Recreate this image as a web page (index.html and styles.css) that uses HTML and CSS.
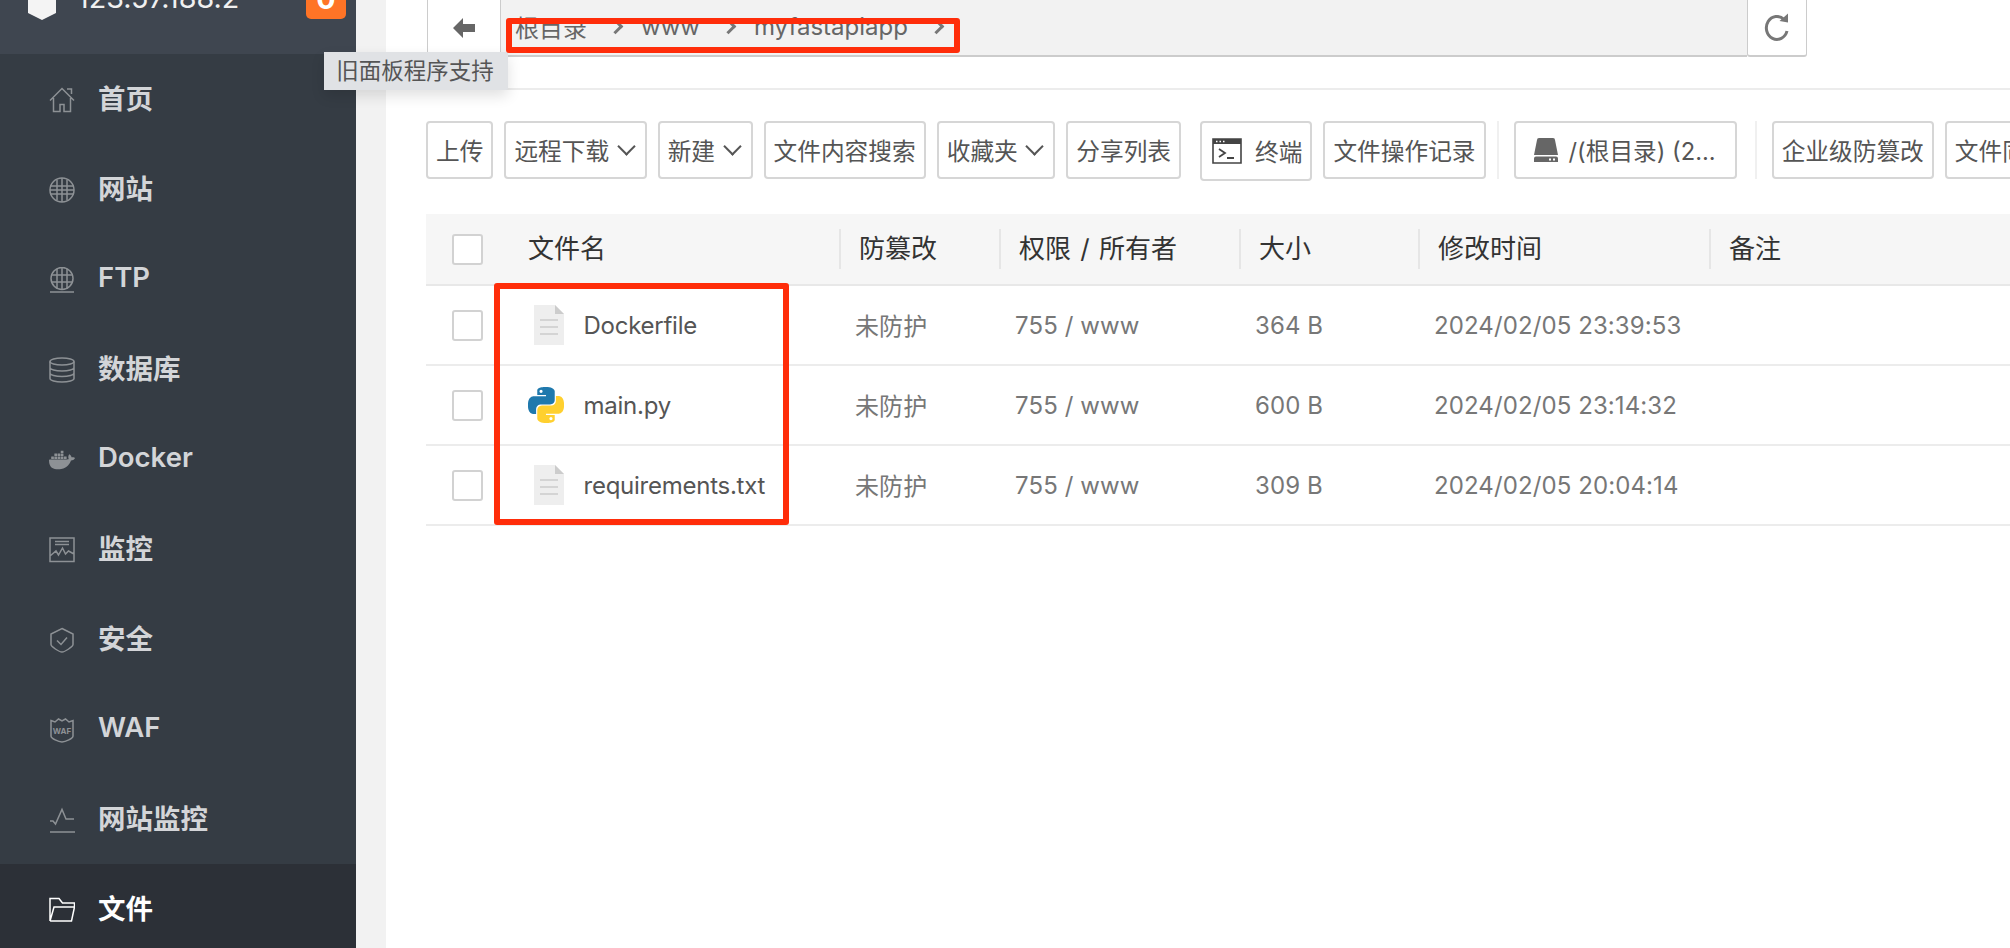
FILE: index.html
```html
<!DOCTYPE html>
<html>
    <head>
        <meta charset="utf-8">
        <title>文件</title>
        <link rel="stylesheet" href="styles.css">
    </head>
    <body>

        <div class="sidebar">
            <div class="side-top">
                <svg class="logo" viewBox="0 0 28 22"><path d="M0 0h28v15l-14 7-14-7z" fill="#f4f4f4"/></svg>
                <span class="ip">123.57.188.2</span>
                <span class="badge">0</span>
            </div>

            <a class="menu">
                <svg class="ico" viewBox="0 0 26 26"><path d="M1 13.500 13 1.500l12 12M4.500 11v13.500h6.500v-7h4v7h6.500V11M18 2h4.500v5"/></svg>
                首页
            </a>
            <a class="menu">
                <svg class="ico" viewBox="0 0 26 26"><circle cx="13" cy="13" r="12"/><path d="M1 9h24M1 13h24M1 17h24M8 2.500v21M13 1v24M18 2.500v21"/></svg>
                网站
            </a>
            <a class="menu">
                <svg class="ico" viewBox="0 0 26 26"><circle cx="13" cy="11.500" r="11"/><path d="M2 8h22M2 15h22M8 2v20M13 1v21M18 2v20M1 25h24"/></svg>
                FTP
            </a>
            <a class="menu">
                <svg class="ico" viewBox="0 0 26 26"><ellipse cx="13" cy="4.500" rx="12" ry="3.500"/><path d="M1 4.500v17c0 2 5.500 3.500 12 3.500s12-1.500 12-3.500v-17M1 10.500c0 2 5.500 3.500 12 3.500s12-1.500 12-3.500M1 16c0 2 5.500 3.500 12 3.500S25 18 25 16"/></svg>
                数据库
            </a>
            <a class="menu">
                <svg class="ico" viewBox="0 0 24 24"><path class="solid" d="M13.983 11.078h2.119a.186.186 0 00.186-.185V9.006a.186.186 0 00-.186-.186h-2.119a.185.185 0 00-.185.185v1.888c0 .102.083.185.185.185m-2.954-5.430h2.118a.186.186 0 00.186-.186V3.574a.186.186 0 00-.186-.185h-2.118a.185.185 0 00-.185.185v1.888c0 .102.082.185.185.186m0 2.716h2.118a.187.187 0 00.186-.186V6.290a.186.186 0 00-.186-.185h-2.118a.185.185 0 00-.185.185v1.887c0 .102.082.185.185.186m-2.930 0h2.120a.186.186 0 00.184-.186V6.290a.185.185 0 00-.185-.185H8.100a.185.185 0 00-.185.185v1.887c0 .102.083.185.185.186m-2.964 0h2.119a.186.186 0 00.185-.186V6.290a.185.185 0 00-.185-.185H5.136a.186.186 0 00-.186.185v1.887c0 .102.084.185.186.186m5.893 2.715h2.118a.186.186 0 00.186-.185V9.006a.186.186 0 00-.186-.186h-2.118a.185.185 0 00-.185.185v1.888c0 .102.082.185.185.185m-2.930 0h2.120a.185.185 0 00.184-.185V9.006a.185.185 0 00-.184-.186h-2.120a.185.185 0 00-.184.185v1.888c0 .102.083.185.185.185m-2.964 0h2.119a.185.185 0 00.185-.185V9.006a.185.185 0 00-.184-.186h-2.120a.186.186 0 00-.186.186v1.887c0 .102.084.185.186.185m-2.920 0h2.120a.185.185 0 00.184-.185V9.006a.185.185 0 00-.184-.186h-2.120a.185.185 0 00-.184.185v1.888c0 .102.082.185.185.185M23.763 9.890c-.065-.051-.672-.510-1.954-.510-.338.001-.676.030-1.010.087-.248-1.700-1.653-2.530-1.716-2.566l-.344-.199-.226.327c-.284.438-.490.922-.612 1.430-.230.970-.090 1.882.403 2.661-.595.332-1.550.413-1.744.420H.751a.751.751 0 00-.750.748 11.376 11.376 0 00.692 4.062c.545 1.428 1.355 2.480 2.410 3.124 1.180.723 3.100 1.137 5.275 1.137.983.003 1.963-.086 2.930-.266a12.248 12.248 0 003.823-1.389c.980-.567 1.860-1.288 2.610-2.136 1.252-1.418 1.998-2.997 2.553-4.400h.221c1.372 0 2.215-.549 2.680-1.009.309-.293.550-.650.707-1.046l.098-.288Z"/></svg>
                Docker
            </a>
            <a class="menu">
                <svg class="ico" viewBox="0 0 26 26"><path d="M1 1h24v23.500H1zM6 4.500h14M6 7.500h14M1 19l6-5 2.500 4 4-7 3 6 3-3 5.500 3"/></svg>
                监控
            </a>
            <a class="menu">
                <svg class="ico" viewBox="0 0 26 26"><path d="M13 1.500 24 7v10.500c0 2-8 7.500-11 7.500S2 19.500 2 17.500V7zM8 13.500l4 4 6-7"/></svg>
                安全
            </a>
            <a class="menu">
                <svg class="ico" viewBox="0 0 26 26"><path d="M2 3.500 6 5l3.500-3L13 4l3.500-2L20 5l4-1.500v15.500c0 2.500-7.500 6-11 6S2 21.500 2 19z"/><text class="waf-txt" x="13" y="16.500">WAF</text></svg>
                WAF
            </a>
            <a class="menu">
                <svg class="ico" viewBox="0 0 26 26"><path d="M1 14h3l2.500 3L13 2.500 17 12h8M1 25h25"/></svg>
                网站监控
            </a>
            <a class="menu active">
                <svg class="ico" viewBox="0 0 26 26"><path d="M1 24V1.500h9L13.500 6H25.500v4M1 24h21.500L25.500 10H5L1 24"/></svg>
                文件
            </a>
        </div>

        <div class="gutter"></div>

        <div class="main">
            <div class="pathbar">
                <div class="back">
                    <svg width="22" height="20" viewBox="0 0 22 20"><path d="M0 10 10 0v6h12v8H10v6z" fill="#666"/></svg>
                </div>
                <div class="crumbs">
                    <span>根目录</span><i class="chev"></i>
                    <span>www</span><i class="chev"></i>
                    <span>myfastapiapp</span><i class="chev"></i>
                </div>
                <div class="reload">
                    <svg width="30" height="32" viewBox="0 0 30 32"><path d="M22 7.500A10.500 11.500 0 1 0 25 19" fill="none" stroke="#777" stroke-width="3"/><path d="M17.500 9 26 10.500V1.500z" fill="#777"/></svg>
                </div>
            </div>

            <div class="toolbar">
                <button class="btn">上传</button>
                <button class="btn">远程下载<i class="caret"></i></button>
                <button class="btn">新建<i class="caret"></i></button>
                <button class="btn">文件内容搜索</button>
                <button class="btn">收藏夹<i class="caret"></i></button>
                <button class="btn">分享列表</button>
                <button class="btn term">
                    <svg width="30" height="26" viewBox="0 0 30 26"><path d="M1 1h28v24H1z" fill="#fff" stroke="#444" stroke-width="1.600"/><path d="M1 1h28v5H1z" fill="#444"/><path d="M4 2.700h1.500v1.500H4zM7.500 2.700H9v1.500H7.500zM11 2.700h1.500v1.500H11z" fill="#fff"/><path d="M7 11l6 4-6 4M15 20h7" fill="none" stroke="#444" stroke-width="1.800"/></svg>
                    终端
                </button>
                <button class="btn">文件操作记录</button>
                <span class="sep"></span>
                <button class="btn disk">
                    <svg width="24" height="24" viewBox="0 0 24 24"><path d="M5 0h14a2 2 0 0 1 2 2l3 15H0L3 2a2 2 0 0 1 2-2z" fill="#666"/><path d="M2 18.500h20a2 2 0 0 1 2 2V24H0v-3.500a2 2 0 0 1 2-2z" fill="#666"/><path d="M15 20.500h2v2h-2zM19 20.500h2v2h-2z" fill="#fff"/></svg>
                    /(根目录) (2...
                </button>
                <span class="sep"></span>
                <button class="btn">企业级防篡改</button>
                <button class="btn">文件同步</button>
            </div>

            <table class="files">
                <colgroup>
                    <col class="c-check"><col class="c-name"><col class="c-lock"><col class="c-perm"><col class="c-size"><col class="c-time"><col>
                </colgroup>
                <thead>
                    <tr>
                        <th class="pick"><span class="box"></span></th>
                        <th><div class="first">文件名</div></th>
                        <th><div>防篡改</div></th>
                        <th><div class="owner">权限 / 所有者</div></th>
                        <th><div>大小</div></th>
                        <th><div>修改时间</div></th>
                        <th><div>备注</div></th>
                    </tr>
                </thead>
                <tbody>
                    <tr>
                        <td class="pick"><span class="box"></span></td>
                        <td class="fname">
                            <svg class="doc" width="30" height="40" viewBox="0 0 30 40"><path d="M0 0h21l9 9v31H0z" fill="#eee"/><path d="M21 0l9 9h-9z" fill="#ccc"/><path d="M6 15h18M6 22h18M6 29h18" stroke="#d4d4d4" stroke-width="2"/></svg>
                            <span>Dockerfile</span>
                        </td>
                        <td class="lock">未防护</td><td>755 / www</td><td>364 B</td><td>2024/02/05 23:39:53</td><td></td>
                    </tr>
                    <tr>
                        <td class="pick"><span class="box"></span></td>
                        <td class="fname">
                            <svg class="py" width="36" height="36" viewBox="0 0 24 24">
                                <path fill="#1f79ad" d="M14.25.18l.9.2.73.26.59.3.45.32.34.34.25.34.16.33.1.3.04.26.02.2-.01.13V8.500l-.05.63-.13.55-.21.46-.26.38-.3.31-.33.25-.35.19-.35.14-.33.1-.3.07-.26.04-.21.02H8.770l-.69.05-.59.14-.5.22-.41.27-.33.32-.27.35-.2.36-.15.37-.1.35-.07.32-.04.27-.02.21v3.060H3.170l-.21-.03-.28-.07-.32-.12-.35-.18-.36-.26-.36-.36-.35-.46-.32-.59-.28-.73-.21-.88-.14-1.050-.05-1.230.06-1.220.16-1.040.24-.87.32-.71.36-.57.4-.44.42-.33.42-.24.4-.16.36-.1.32-.05.24-.01h.16l.06.01h8.160v-.83H6.180l-.01-2.750-.02-.37.05-.34.11-.31.17-.28.25-.26.31-.23.38-.2.44-.18.51-.15.58-.12.64-.1.71-.06.77-.04.84-.02 1.270.05zm-6.300 1.980l-.23.33-.08.41.08.41.23.34.33.22.41.09.41-.09.33-.22.23-.34.08-.41-.08-.41-.23-.33-.33-.22-.41-.09-.41.09z"/>
                                <path fill="#ffd02f" d="M21.040 6.110l.28.06.32.12.35.18.36.27.36.35.35.47.32.59.28.73.21.88.14 1.040.05 1.230-.06 1.230-.16 1.040-.24.86-.32.71-.36.57-.4.45-.42.33-.42.24-.4.16-.36.09-.32.05-.24.02-.16-.01h-8.220v.82h5.840l.01 2.760.02.36-.05.34-.11.31-.17.29-.25.25-.31.24-.38.2-.44.17-.51.15-.58.13-.64.09-.71.07-.77.04-.84.01-1.270-.04-1.070-.14-.9-.2-.73-.25-.59-.3-.45-.33-.34-.34-.25-.34-.16-.33-.1-.3-.04-.25-.02-.2.01-.13v-5.340l.05-.64.13-.54.21-.46.26-.38.3-.32.33-.24.35-.2.35-.14.33-.1.3-.06.26-.04.21-.02.13-.01h5.840l.69-.05.59-.14.5-.21.41-.28.33-.32.27-.35.2-.36.15-.36.1-.35.07-.32.04-.28.02-.21V6.070h2.090l.14.01zm-6.470 14.250l-.23.33-.08.41.08.41.23.33.33.23.41.08.41-.08.33-.23.23-.33.08-.41-.08-.41-.23-.33-.33-.23-.41-.08-.41.08z"/>
                            </svg>
                            <span>main.py</span>
                        </td>
                        <td class="lock">未防护</td><td>755 / www</td><td>600 B</td><td>2024/02/05 23:14:32</td><td></td>
                    </tr>
                    <tr>
                        <td class="pick"><span class="box"></span></td>
                        <td class="fname">
                            <svg class="doc" width="30" height="40" viewBox="0 0 30 40"><path d="M0 0h21l9 9v31H0z" fill="#eee"/><path d="M21 0l9 9h-9z" fill="#ccc"/><path d="M6 15h18M6 22h18M6 29h18" stroke="#d4d4d4" stroke-width="2"/></svg>
                            <span>requirements.txt</span>
                        </td>
                        <td class="lock">未防护</td><td>755 / www</td><td>309 B</td><td>2024/02/05 20:04:14</td><td></td>
                    </tr>
                </tbody>
            </table>
        </div>

        <!-- things on top of the page: tooltip and the two red marks -->
        <div class="tip">旧面板程序支持</div>
        <div class="mark mark-path"></div>
        <div class="mark mark-files"></div>

    </body>
</html>
```

FILE: styles.css
```css
html, body {
    margin: 0;
    height: 100%;
    overflow: hidden;
}

body {
    display: flex;
    height: 948px;
    position: relative;
    font-family: Inter, "Noto Sans CJK SC", sans-serif;
    font-size: 24px;
    color: #555;
    background: #fff;
}

/* left menu */

.sidebar {
    width: 356px;
    flex: none;
    background: #353c44;
    overflow: hidden;
}

.side-top {
    height: 54px;
    box-sizing: border-box;
    background: #3f4650;
    display: flex;
    align-items: flex-end;
    padding: 0 10px 35px 28px;
    color: #f0f0f0;
    font-size: 28.700px;
    line-height: 30px;
}

.logo {
    width: 28px;
    height: 22px;
    flex: none;
    margin-bottom: -1px;
}

.ip {
    margin-left: 21px;
    margin-bottom: 6px;
    flex: 1;
}

.badge {
    width: 40px;
    height: 40px;
    line-height: 40px;
    text-align: center;
    background: #ff7426;
    color: #fff;
    border-radius: 5px;
    font-weight: 700;
}

.menu {
    height: 90px;
    box-sizing: border-box;
    display: flex;
    align-items: center;
    padding: 0 0 5px 49px;
    font-size: 27.500px;
    font-weight: 600;
    color: #d3d5d8;
}

.ico {
    width: 26px;
    height: 26px;
    margin: 6px 23px 0 0;
    flex: none;
    fill: none;
    stroke: #8d9195;
    stroke-width: 1.500;
}

.ico .solid {
    fill: #8d9195;
    stroke: none;
}

.waf-txt {
    font-size: 8px;
    font-weight: 700;
    fill: #8d9195;
    stroke: none;
    text-anchor: middle;
}

.menu.active {
    background: #2c3037;
    color: #fff;
}

.menu.active .ico {
    stroke: #fff;
}

.gutter {
    width: 30px;
    flex: none;
    background: #f2f2f2;
}

/* right side */

.main {
    flex: 1;
    min-width: 0;
    overflow: hidden;
}

.pathbar {
    display: flex;
    height: 90px;
    box-sizing: border-box;
    border-bottom: 2px solid #ececec;
    padding: 0 203px 31px 41px;
}

.back {
    width: 74px;
    flex: none;
    display: flex;
    align-items: center;
    justify-content: center;
    background: #fff;
    border: 1px solid #ccc;
    border-top: 0;
    border-bottom: 2px solid #ccc;
    box-sizing: border-box;
}

.crumbs {
    flex: 1;
    display: flex;
    align-items: center;
    background: #f2f2f2;
    border-bottom: 2px solid #ccc;
    padding: 0 0 3px 14px;
    color: #666;
}

.chev {
    width: 8px;
    height: 8px;
    border-top: 3px solid #777;
    border-right: 3px solid #777;
    transform: rotate(45deg);
    margin: 0 20px 0 23px;
}

.reload {
    width: 60px;
    flex: none;
    display: flex;
    align-items: center;
    justify-content: center;
    box-sizing: border-box;
    border: 1px solid #ccc;
    border-top: 0;
    border-bottom: 2px solid #ccc;
    border-radius: 0 0 3px 3px;
}

.toolbar {
    display: flex;
    align-items: flex-start;
    gap: 11px;
    padding: 31px 0 0 40px;
    height: 124px;
    box-sizing: border-box;
    white-space: nowrap;
}

.btn {
    height: 58px;
    flex: none;
    box-sizing: border-box;
    padding: 0 8px;
    background: #fff;
    border: 2px solid #d6d6d6;
    border-radius: 4px;
    font-family: inherit;
    font-size: 23.700px;
    color: #555;
    display: flex;
    align-items: center;
}

.caret {
    width: 11px;
    height: 11px;
    border-right: 2px solid #555;
    border-bottom: 2px solid #555;
    transform: rotate(45deg);
    margin: -8px 4px 0 10.500px;
}

.term {
    height: 60px;
    margin-left: 8px;
}

.term svg {
    margin: 0 13px 0 2px;
}

.disk {
    padding-right: 19px;
    margin-right: 7px;
}

.disk svg {
    margin: 0 11px 0 10px;
}

.sep {
    width: 2px;
    height: 58px;
    margin-right: 4px;
    background: #f0f0f0;
    flex: none;
}

/* file table */

.files {
    width: 1584px;
    margin-left: 40px;
    border-collapse: collapse;
    table-layout: fixed;
}

.c-check { width: 88px; }
.c-name { width: 325px; }
.c-lock { width: 160px; }
.c-perm { width: 240px; }
.c-size { width: 179px; }
.c-time { width: 291px; }

.files th {
    height: 70px;
    padding: 0;
    background: #f6f6f6;
    border-bottom: 2px solid #e8e8e8;
    font-size: 26px;
    font-weight: 400;
    text-align: left;
    color: #333;
}

.files th div {
    height: 40px;
    line-height: 40px;
    padding-left: 18px;
    border-left: 2px solid #e6e6e6;
}

.files th div.first {
    border-left: 0;
    padding-left: 14px;
}

.files th div.owner {
    word-spacing: 2px;
}

.files td {
    height: 78px;
    padding: 0 0 0 16px;
    border-bottom: 2px solid #ececec;
    color: #777;
    letter-spacing: 0.100px;
}

.files td.lock {
    height: 76px;
    padding-bottom: 2px;
}

.files .pick {
    padding: 0 0 0 26px;
}

.box {
    display: block;
    width: 31px;
    height: 31px;
    box-sizing: border-box;
    background: #fff;
    border: 2px solid #d2d2d2;
    border-radius: 3px;
}

.files td.fname {
    padding-left: 14px;
    color: #555;
    letter-spacing: -0.250px;
    white-space: nowrap;
}

.fname svg, .fname span {
    vertical-align: middle;
}

.doc {
    margin: 0 13px 0 6px;
}

.py {
    margin-right: 13px;
}

/* overlays */

.tip {
    position: absolute;
    left: 324px;
    top: 52px;
    width: 184px;
    height: 38px;
    box-sizing: border-box;
    padding-right: 2px;
    line-height: 38px;
    text-align: center;
    font-size: 22.500px;
    color: #555;
    background: #e0e2e5;
    border-radius: 0 0 2px 0;
    box-shadow: 0 6px 14px rgba(0, 0, 0, 0.12);
}

.mark {
    position: absolute;
    box-sizing: border-box;
    border: 6px solid #ff2d0a;
    border-radius: 3px;
}

.mark-path {
    left: 506px;
    top: 18px;
    width: 454px;
    height: 35px;
}

.mark-files {
    left: 494px;
    top: 283px;
    width: 295px;
    height: 242px;
}
```
